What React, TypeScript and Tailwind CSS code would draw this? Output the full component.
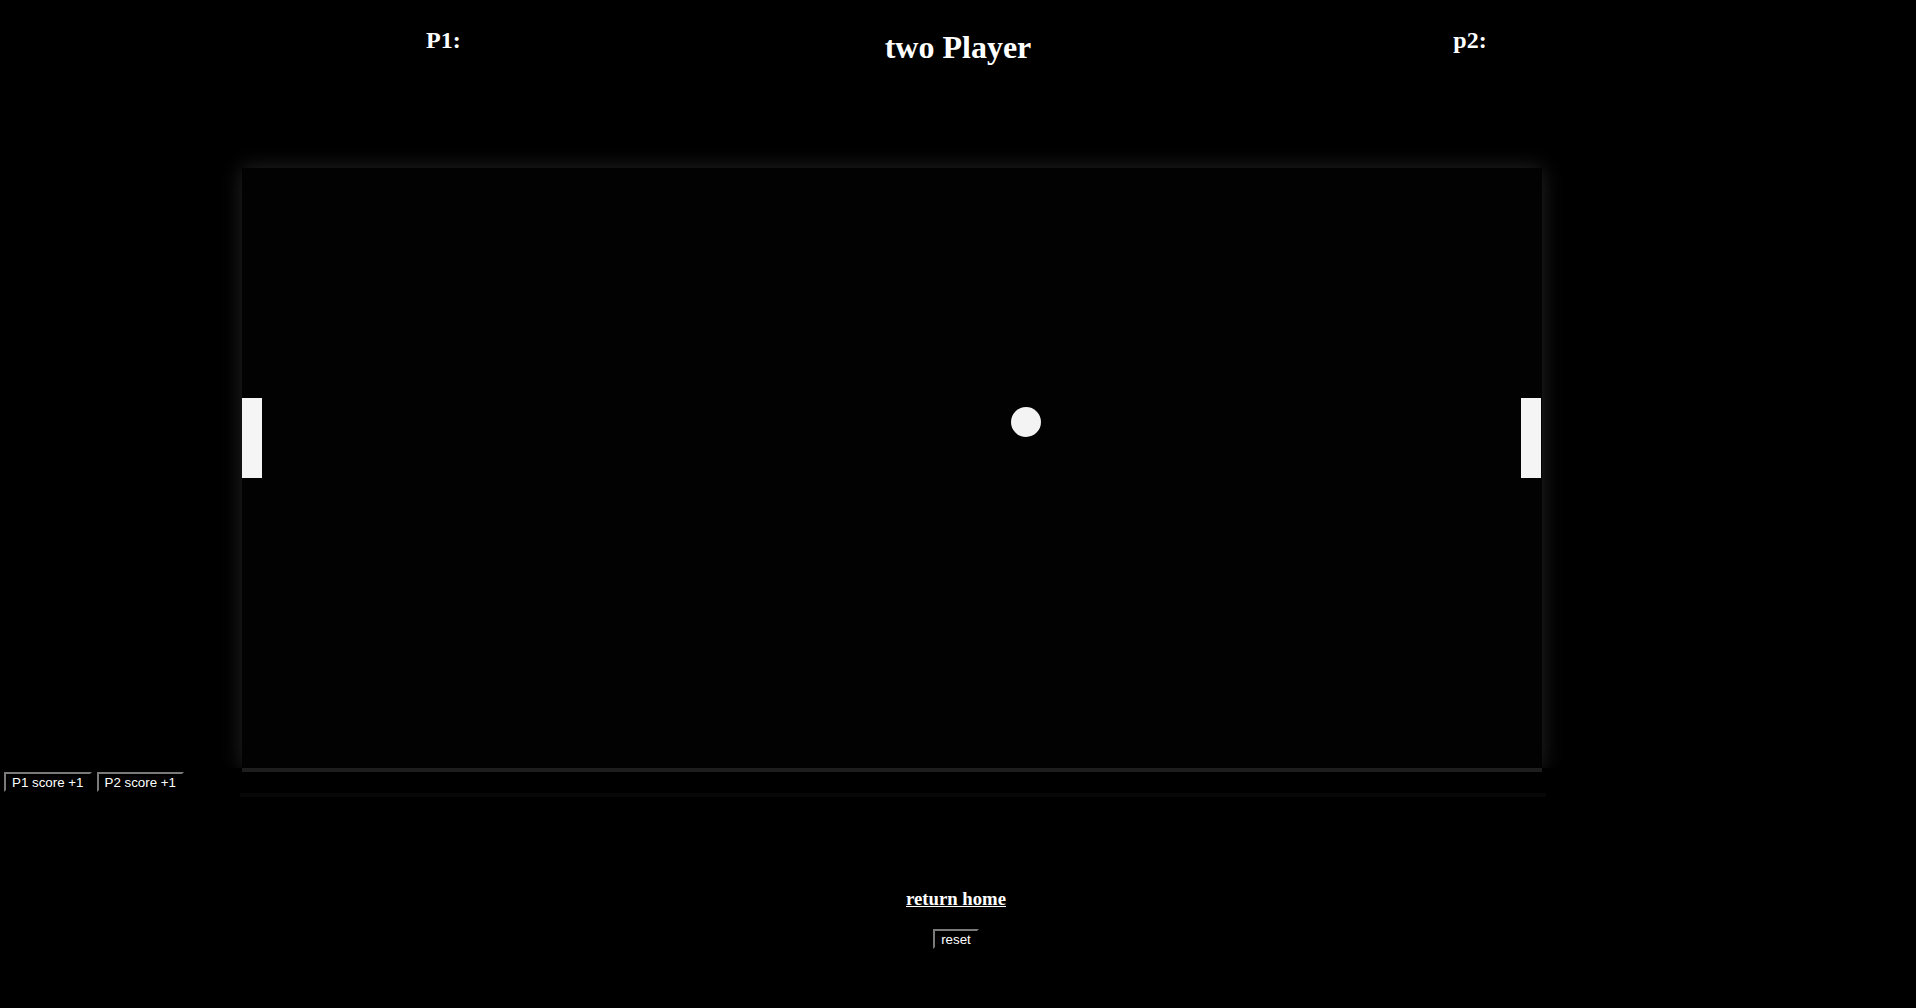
import React from "react";

const serif = "font-['Liberation_Serif','Times_New_Roman',serif]";
const sans = "font-['Liberation_Sans',Arial,sans-serif]";

const btn =
  "h-[20px] px-[6px] pt-[1px] pb-0 leading-[15px] text-[13.33px] text-white bg-black border-2 border-t-[#7a7a7a] border-l-[#7a7a7a] border-b-black border-r-black " +
  sans;

export default function App() {
  // paddle + ball positions inside the 1300x600 court
  const leftPaddle = { x: 0, y: 230 };
  const rightPaddle = { x: 1279, y: 230 };
  const ball = { x: 784, y: 254, r: 15 };

  return (
    <div className="min-h-[1008px] w-full bg-black text-white">
      {/* Header */}
      <div className={`grid grid-cols-[1fr_auto_1fr] items-start font-bold ${serif}`}>
        <div className="pl-[426px]">
          <h2 className="mt-[28px] text-[24px] leading-none">P1:</h2>
        </div>
        <h1 className="mt-[31px] text-[32px] leading-none">two Player</h1>
        <div className="pl-[422px]">
          <h2 className="mt-[28px] text-[24px] leading-none">p2:</h2>
        </div>
      </div>

      {/* Court */}
      <div className="mt-[85px] ml-[222px] w-[1340px] overflow-hidden px-[20px] pt-[20px]">
        <div className="relative h-[600px] w-[1300px] bg-[#020202] shadow-[0_0_20px_rgba(255,255,255,0.15)]">
          <div
            className="absolute h-[80px] w-[20px] bg-[#f5f5f5]"
            style={{ left: leftPaddle.x, top: leftPaddle.y }}
          />
          <div
            className="absolute h-[80px] w-[20px] bg-[#f5f5f5]"
            style={{ left: rightPaddle.x, top: rightPaddle.y }}
          />
          <div
            className="absolute rounded-full bg-[#f3f3f3]"
            style={{
              left: ball.x - ball.r,
              top: ball.y - ball.r,
              width: ball.r * 2,
              height: ball.r * 2,
            }}
          />
        </div>
      </div>
      <div className="ml-[242px] h-[4px] w-[1300px] bg-[#1e1e1e]" />

      {/* Score buttons */}
      <div className="flex gap-[5px] pl-[4px]">
        <button className={btn}>P1 score +1</button>
        <button className={btn}>P2 score +1</button>
      </div>
      <div className="ml-[240px] mt-[1px] h-[4px] w-[1306px] bg-[#070707]" />

      {/* Footer */}
      <div className="flex flex-col items-center pr-[4px]">
        <div className="mt-[90px] h-[19px]">
          <a
            href="#"
            className={`text-[18.72px] font-bold leading-none text-white underline ${serif}`}
          >
            return home
          </a>
        </div>
        <button className={`mt-[23px] ${btn}`}>reset</button>
      </div>
    </div>
  );
}
